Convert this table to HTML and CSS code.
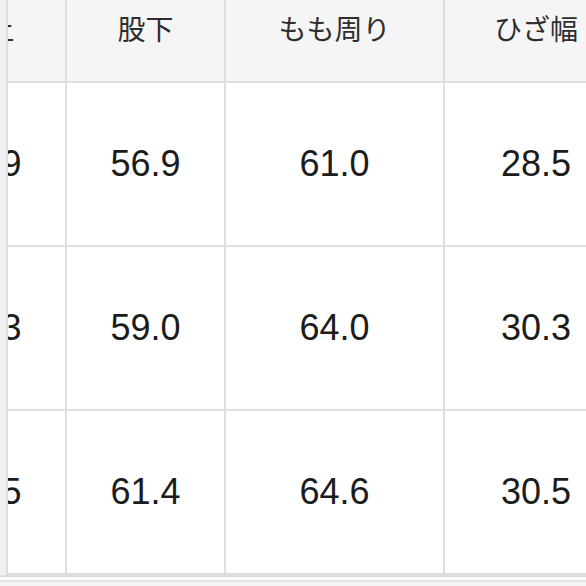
FILE: index.html
```html
<!DOCTYPE html>
<html lang="ja">
<head>
<meta charset="utf-8">
<link rel="stylesheet" href="styles.css">
</head>
<body>
<div class="viewport">
  <div class="frame">
    <div class="strip"></div>
    <div class="clip">
      <table class="sizes">
        <colgroup>
          <col class="c1"><col class="c2"><col class="c3"><col class="c4">
        </colgroup>
        <thead>
          <tr class="head">
            <th>股上</th><th>股下</th><th>もも周り</th><th>ひざ幅</th>
          </tr>
        </thead>
        <tbody>
          <tr class="row"><td>27.9</td><td>56.9</td><td>61.0</td><td>28.5</td></tr>
          <tr class="row"><td>28.3</td><td>59.0</td><td>64.0</td><td>30.3</td></tr>
          <tr class="row"><td>29.5</td><td>61.4</td><td>64.6</td><td>30.5</td></tr>
        </tbody>
      </table>
    </div>
  </div>
  <div class="foot"></div>
</div>
</body>
</html>
```

FILE: styles.css
```css
html, body {
  margin: 0;
  padding: 0;
  background: #f4f5f6;
}
.viewport {
  width: 586px;
  height: 586px;
  overflow: hidden;
  background: #f4f5f6;
}
.frame {
  display: flex;
  background: #ffffff;
  border-bottom: 2px solid #dcdfe2;
}
.strip {
  flex: 0 0 6px;
  background: #eef0f2;
  border-right: 2px solid #dadde0;
}
.clip {
  flex: 1 1 auto;
  overflow: hidden;
}
.sizes {
  border-collapse: collapse;
  table-layout: fixed;
  width: 721px;
  margin-left: -102px;
  margin-top: -2px;
  font-family: "Liberation Sans", Arial, "Noto Sans CJK JP", sans-serif;
}
.c1 { width: 159px; }
.c2 { width: 159px; }
.c3 { width: 219px; }
.c4 { width: 184px; }
.sizes th, .sizes td {
  border: 2px solid #dcdfe2;
  text-align: center;
  padding: 0;
  white-space: nowrap;
}
.sizes th {
  background: #f5f5f5;
  font-family: "Noto Sans CJK JP", sans-serif;
  font-weight: 400;
  font-size: 28px;
  color: #2e2e2e;
  vertical-align: top;
  line-height: 32px;
  padding-top: 12px;
}
.head {
  height: 83px;
}
.row {
  height: 164px;
}
.sizes td {
  background: #ffffff;
  font-size: 36px;
  color: #1c1c1c;
  vertical-align: middle;
}
.foot {
  height: 3px;
  background: #ffffff;
  border-bottom: 2px solid #e2e4e6;
}
```
